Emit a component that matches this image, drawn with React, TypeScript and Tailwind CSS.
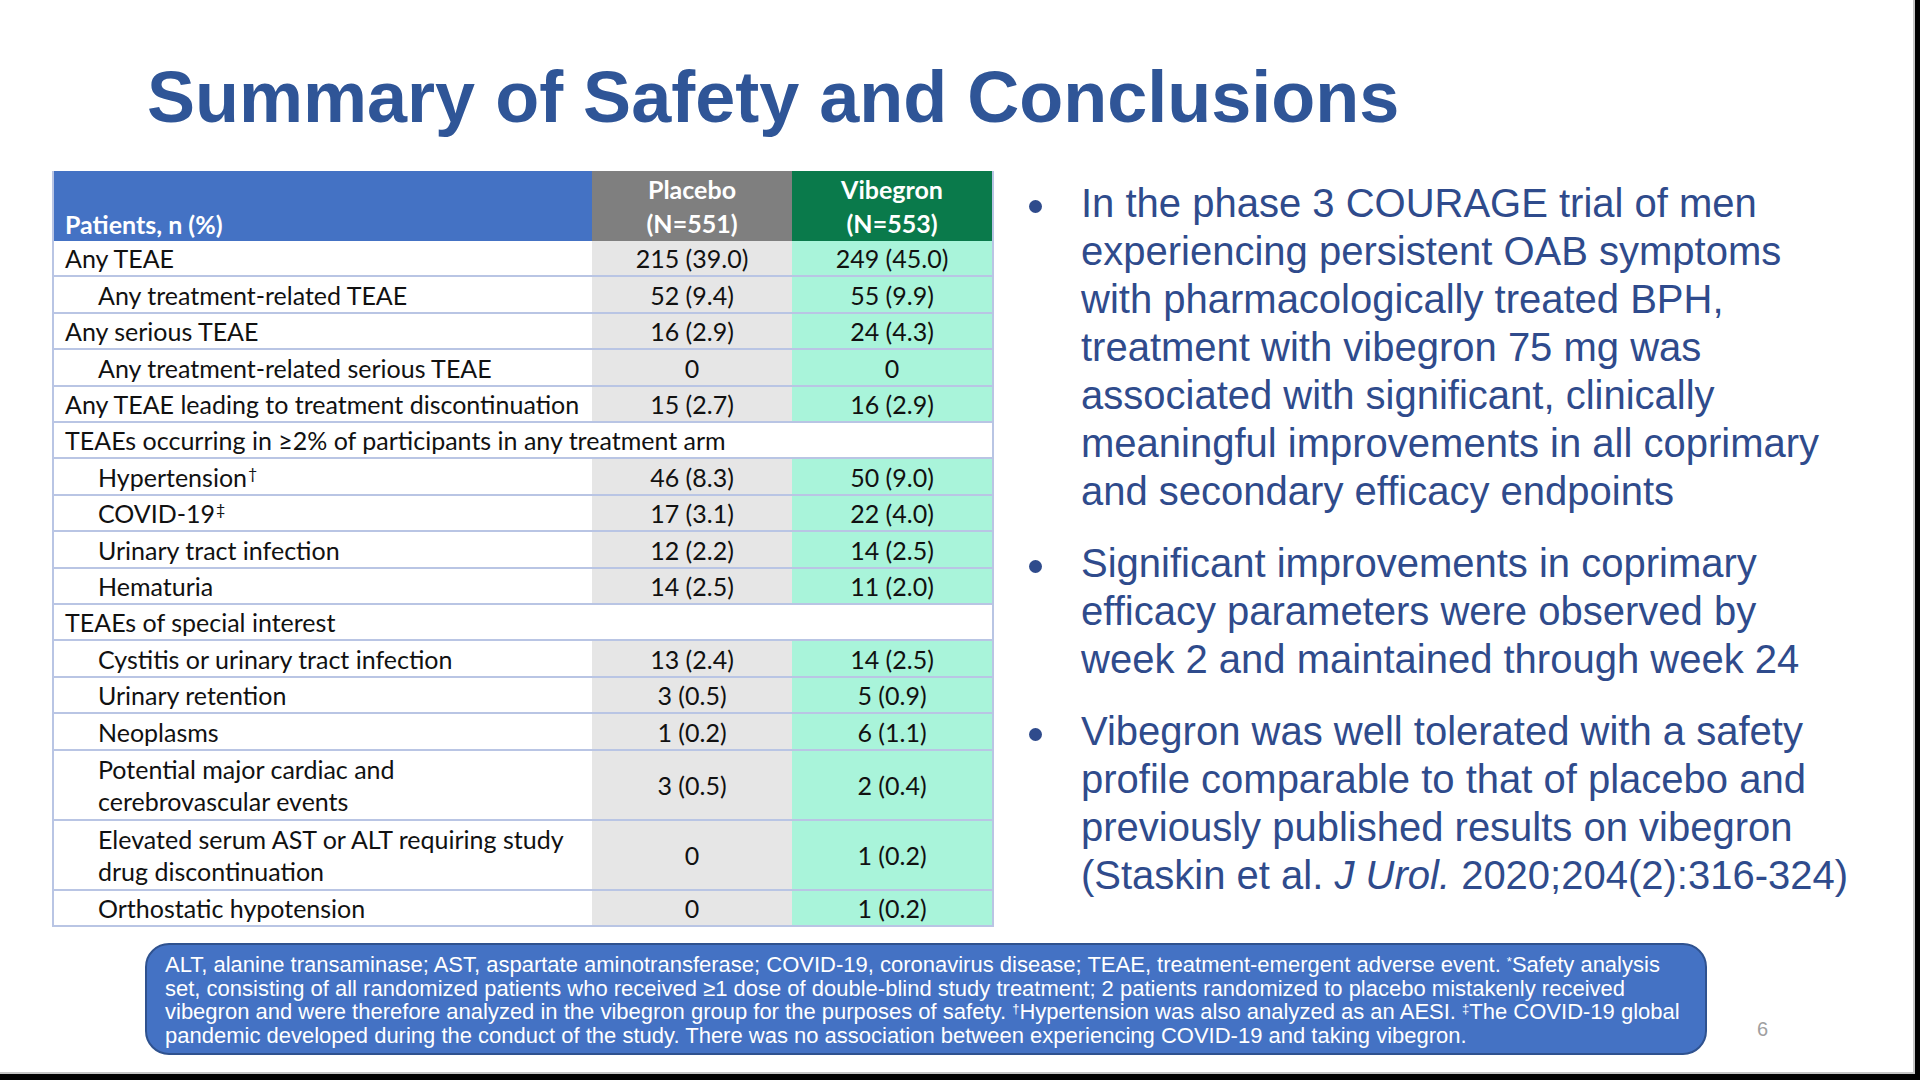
import React from "react";

type Row =
  | { section: string }
  | { label: string | string[]; sup?: string; indent: boolean; p: string; v: string };

const rows: Row[] = [
  { label: "Any TEAE", indent: false, p: "215 (39.0)", v: "249 (45.0)" },
  { label: "Any treatment-related TEAE", indent: true, p: "52 (9.4)", v: "55 (9.9)" },
  { label: "Any serious TEAE", indent: false, p: "16 (2.9)", v: "24 (4.3)" },
  { label: "Any treatment-related serious TEAE", indent: true, p: "0", v: "0" },
  { label: "Any TEAE leading to treatment discontinuation", indent: false, p: "15 (2.7)", v: "16 (2.9)" },
  { section: "TEAEs occurring in ≥2% of participants in any treatment arm" },
  { label: "Hypertension", sup: "†", indent: true, p: "46 (8.3)", v: "50 (9.0)" },
  { label: "COVID-19", sup: "‡", indent: true, p: "17 (3.1)", v: "22 (4.0)" },
  { label: "Urinary tract infection", indent: true, p: "12 (2.2)", v: "14 (2.5)" },
  { label: "Hematuria", indent: true, p: "14 (2.5)", v: "11 (2.0)" },
  { section: "TEAEs of special interest" },
  { label: "Cystitis or urinary tract infection", indent: true, p: "13 (2.4)", v: "14 (2.5)" },
  { label: "Urinary retention", indent: true, p: "3 (0.5)", v: "5 (0.9)" },
  { label: "Neoplasms", indent: true, p: "1 (0.2)", v: "6 (1.1)" },
  { label: ["Potential major cardiac and", "cerebrovascular events"], indent: true, p: "3 (0.5)", v: "2 (0.4)" },
  { label: ["Elevated serum AST or ALT requiring study", "drug discontinuation"], indent: true, p: "0", v: "1 (0.2)" },
  { label: "Orthostatic hypotension", indent: true, p: "0", v: "1 (0.2)" },
];

const bullets: React.ReactNode[][] = [
  [
    "In the phase 3 COURAGE trial of men",
    "experiencing persistent OAB symptoms",
    "with pharmacologically treated BPH,",
    "treatment with vibegron 75 mg was",
    "associated with significant, clinically",
    "meaningful improvements in all coprimary",
    "and secondary efficacy endpoints",
  ],
  [
    "Significant improvements in coprimary",
    "efficacy parameters were observed by",
    "week 2 and maintained through week 24",
  ],
  [
    "Vibegron was well tolerated with a safety",
    "profile comparable to that of placebo and",
    "previously published results on vibegron",
    <>
      (Staskin et al. <i>J Urol.</i> 2020;204(2):316-324)
    </>,
  ],
];

function DataTable() {
  let single = 0;
  return (
    <div className="w-[942px] border-x-2 border-[#b9c5e4] font-['Lato',sans-serif] text-[25px] leading-[32px] text-[#111111]">
      <div className="grid h-[70px] grid-cols-[538px_200px_200px] font-bold leading-[34px] text-white">
        <div className="flex items-end bg-[#4472c4] pl-[11px]">Patients, n (%)</div>
        <div className="flex flex-col items-center justify-center bg-[#7f7f7f]">
          <span>Placebo</span>
          <span>(N=551)</span>
        </div>
        <div className="flex flex-col items-center justify-center bg-[#0a7a4b]">
          <span>Vibegron</span>
          <span>(N=553)</span>
        </div>
      </div>
      {rows.map((r, i) => {
        const dbl = !("section" in r) && Array.isArray(r.label);
        let hClass = "h-[70px]";
        if (!dbl) {
          const k = single++;
          hClass = k % 5 === 1 || k % 5 === 3 ? "h-[37px]" : "h-[36px]";
        }
        if ("section" in r) {
          return (
            <div key={i} className={`flex items-center border-b-2 border-[#b9c5e4] bg-white pl-[11px] ${hClass}`}>
              {r.section}
            </div>
          );
        }
        return (
          <div key={i} className={`grid grid-cols-[538px_200px_200px] border-b-2 border-[#b9c5e4] ${hClass}`}>
            <div className={`flex flex-col justify-center overflow-hidden bg-white ${r.indent ? "pl-[44px]" : "pl-[11px]"}`}>
              {dbl ? (
                (r.label as string[]).map((l, j) => <span key={j}>{l}</span>)
              ) : (
                <span>
                  {r.label as string}
                  {r.sup && <sup className="ml-[1px] text-[16px] leading-none">{r.sup}</sup>}
                </span>
              )}
            </div>
            <div className="flex items-center justify-center overflow-hidden bg-[#e6e6e6]">{r.p}</div>
            <div className="flex items-center justify-center overflow-hidden bg-[#a9f4da]">{r.v}</div>
          </div>
        );
      })}
    </div>
  );
}

export default function App() {
  return (
    <div className="h-[1080px] w-[1920px] overflow-hidden bg-black">
      <div className="flex h-[1074px] w-[1915px] flex-col border-b-2 border-r-2 border-[#c4c4c4] bg-white font-['Liberation_Sans',Arial,sans-serif]">
        <h1 className="pl-[147px] pt-[61px] text-[72px] font-bold leading-[72px] text-[#2f5597]">
          Summary of Safety and Conclusions
        </h1>
        <div className="mt-[38px] flex pl-[52px]">
          <DataTable />
          <div className="ml-[35px] mt-[8px] flex flex-col gap-[24px] text-[40px] leading-[48px] text-[#2f4b8c]">
            {bullets.map((lines, i) => (
              <div key={i} className="flex">
                <div className="mt-[21px] h-[13px] w-[13px] shrink-0 rounded-full bg-[#2f4b8c]" />
                <div className="ml-[39px] flex flex-col whitespace-nowrap">
                  {lines.map((l, j) => (
                    <span key={j}>{l}</span>
                  ))}
                </div>
              </div>
            ))}
          </div>
        </div>
        <div className="mt-[16px] flex items-start pl-[145px]">
          <div className="h-[112px] w-[1562px] rounded-[24px] border-2 border-[#2f528f] bg-[#4472c4] px-[18px] pt-[8px] text-[22px] leading-[23.5px] text-white">
            <div className="whitespace-nowrap">
              ALT, alanine transaminase; AST, aspartate aminotransferase; COVID-19, coronavirus disease; TEAE,
              treatment-emergent adverse event. <sup className="text-[13px]">*</sup>Safety analysis
            </div>
            <div className="whitespace-nowrap">
              set, consisting of all randomized patients who received ≥1 dose of double-blind study treatment; 2
              patients randomized to placebo mistakenly received
            </div>
            <div className="whitespace-nowrap">
              vibegron and were therefore analyzed in the vibegron group for the purposes of safety.{" "}
              <sup className="text-[13px]">†</sup>Hypertension was also analyzed as an AESI.{" "}
              <sup className="text-[13px]">‡</sup>The COVID-19 global
            </div>
            <div className="whitespace-nowrap">
              pandemic developed during the conduct of the study. There was no association between experiencing
              COVID-19 and taking vibegron.
            </div>
          </div>
          <div className="ml-[50px] mt-[71px] text-[20px] text-[#a0a0a0]">6</div>
        </div>
      </div>
    </div>
  );
}
